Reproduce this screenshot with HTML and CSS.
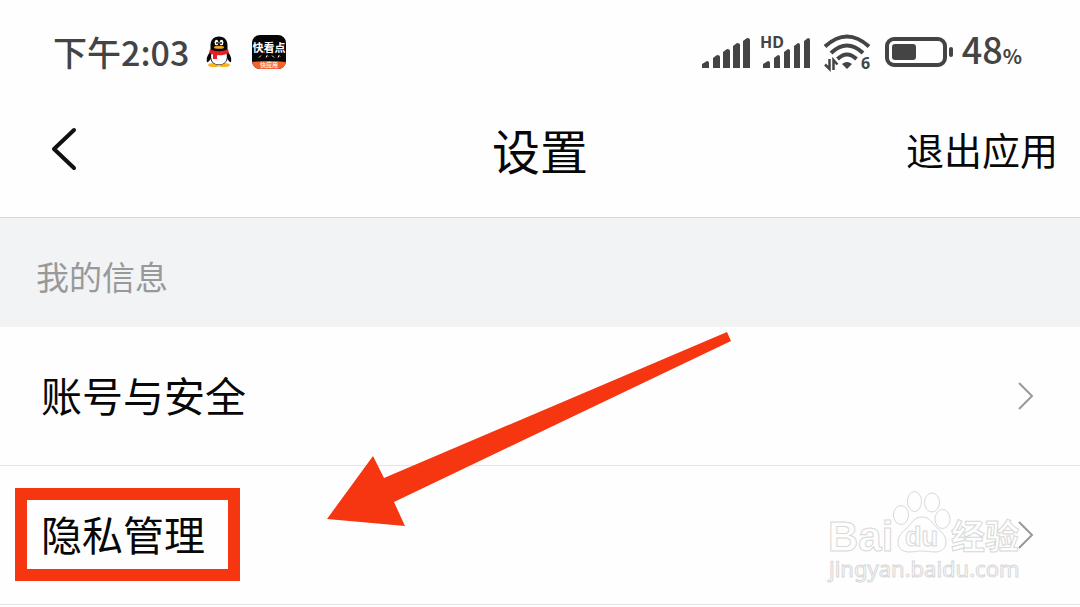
FILE: index.html
```html
<!DOCTYPE html>
<html lang="zh-CN">
<head>
<meta charset="utf-8">
<meta name="viewport" content="width=device-width, initial-scale=1">
<title>设置</title>
<link rel="stylesheet" href="styles.css">
</head>
<body>
<div class="status-bar">
  <span class="clock">下午2:03</span>
  <svg class="app-icon" viewBox="0 0 36 36" aria-hidden="true">
    <ellipse cx="13" cy="31" rx="6" ry="2" fill="#f6b420"/>
    <ellipse cx="23" cy="31" rx="6" ry="2" fill="#f6b420"/>
    <path d="M10 17C7 20 5 24 6 28c1 1 3-2 4-4zM26 17c3 3 5 7 4 11-1 1-3-2-4-4z" fill="#080808"/>
    <path d="M18 2.500c-6 0-8.500 4-8.500 9v6C8 22 9 31 18 31s10-9 8.500-13.500v-6c0-5-2.500-9-8.500-9z" fill="#080808"/>
    <path d="M10.500 19c-1.500 7 1.500 11.500 7.500 11.500s9-4.500 7.500-11.500z" fill="#fff"/>
    <ellipse cx="15.500" cy="8.500" rx="1.900" ry="2.700" fill="#fff"/>
    <ellipse cx="20.500" cy="8.500" rx="1.900" ry="2.700" fill="#fff"/>
    <circle cx="16" cy="9" r="1" fill="#111"/><circle cx="20" cy="9" r="1" fill="#111"/>
    <ellipse cx="18" cy="13.200" rx="5" ry="1.500" fill="#f6a81c"/>
    <path d="M9 15c5 3 13 3 18 0l1 4c-4 2-8 2.500-12 2.200V25h-4v-4.500l-4-1.500z" fill="#e51f25"/>
  </svg>
  <svg class="app-icon news-icon" viewBox="0 0 36 36" aria-hidden="true">
    <defs><clipPath id="news-clip"><rect x="1" y="1" width="34" height="34" rx="8"/></clipPath></defs>
    <g clip-path="url(#news-clip)">
      <rect width="36" height="36" fill="#050505"/>
      <path d="M0 28q18-2 36 0v8H0z" fill="#f4642c"/>
      <text class="news-name" x="18" y="18" text-anchor="middle">快看点</text>
      <circle cx="13" cy="18" r="1" fill="#e83a24"/>
      <path d="M8 23.500l2-2M15 23.500l1-2 1 1M21 21.500l2 2M27 23.500l1-2 1 1" stroke="#eee" fill="none"/>
      <text class="news-tag" x="18" y="33" text-anchor="middle">快应用</text>
    </g>
  </svg>
  <div class="indicators">
    <svg class="signal" viewBox="0 0 48 36" role="img" aria-label="信号">
      <g fill="#444"><path d="M0 34v-4l5-3q2 0 2 2v5zM11 34V24l4-3q3 0 3 2v11zM21 34V18l4-3q3 0 3 2v17zM31 34V12l4-3q3 0 3 2v23zM41 34V7l4-3q3 0 3 2v28z"/></g>
    </svg>
    <svg class="signal signal-hd" viewBox="0 0 52 36" role="img" aria-label="HD 信号">
      <g fill="#444"><path d="M4 34v-4l5-3q2 0 2 2v5zM15 34V24l4-3q2 0 2 2v11zM25 34V18l4-3q2 0 2 2v17zM35 34V12l4-3q2 0 2 2v23zM45 34V7l4-3q2 0 2 2v28z"/></g>
      <text class="hd-text" x="1" y="14">HD</text>
    </svg>
    <svg class="wifi" viewBox="0 0 48 38" role="img" aria-label="Wi-Fi 6">
      <g fill="none" stroke="#444" stroke-width="4">
        <path d="M2 13.500Q24-6.500 46 13.500"/>
        <path d="M8 20Q24 5 40 20"/>
        <path d="M14.500 26Q24 17 33.500 26"/>
      </g>
      <path d="M19 31q5-4 10 0l-5 5z" fill="#444"/>
      <path d="M6.500 26v10L2 31.500M10.500 37V27l4 4.500" fill="none" stroke="#444" stroke-width="2.500"/>
      <text class="wifi-text" x="38" y="36">6</text>
    </svg>
    <svg class="battery" viewBox="0 0 68 30" role="img" aria-label="电量">
      <rect x="2" y="2" width="58" height="26" rx="7" fill="none" stroke="#444" stroke-width="4"/>
      <rect x="7" y="7" width="24" height="16" rx="3" fill="#444"/>
      <rect x="64" y="10" width="4" height="10" rx="2" fill="#444"/>
    </svg>
    <span class="percent">48<small>%</small></span>
  </div>
</div>

<header class="title-bar">
  <button class="back" type="button" aria-label="返回">
    <svg viewBox="0 0 28 44"><path d="M24 3L4 22l20 19" fill="none" stroke="#111" stroke-width="4" stroke-linecap="round" stroke-linejoin="round"/></svg>
  </button>
  <h1 class="title">设置</h1>
  <button class="exit" type="button">退出应用</button>
</header>

<main>
  <h2 class="section-title">我的信息</h2>
  <nav class="list">
    <a class="row" href="#account">
      <span class="label">账号与安全</span>
      <svg class="chevron" viewBox="0 0 18 28"><path d="M2 1l13 13L2 27"/></svg>
    </a>
    <a class="row marked" href="#privacy">
      <span class="label">隐私管理</span>
      <svg class="chevron" viewBox="0 0 18 28"><path d="M2 1l13 13L2 27"/></svg>
    </a>
    <svg class="arrow" viewBox="0 0 404 194" aria-hidden="true">
      <path d="M0 187L46 124l11 22L400 0l4 9L67 170l11 24z" fill="#f63610"/>
    </svg>
    <svg class="watermark" viewBox="0 0 200 96" aria-hidden="true">
      <text class="wm-brand" x="2" y="62">Bai</text>
      <g>
        <ellipse cx="75" cy="26" rx="7.500" ry="9.500"/>
        <ellipse cx="88.500" cy="12.500" rx="7" ry="10"/>
        <ellipse cx="106" cy="13.500" rx="7.500" ry="9.500"/>
        <ellipse cx="116.500" cy="30" rx="7.500" ry="9.500"/>
        <path d="M96 28c-8 0-10 6-15 11-5 4-9 8-9 14 0 7 5 10 11 10 5 0 8-1 13-1s8 1 13 1c7 0 11-4 11-10s-4-10-9-14c-5-5-7-11-15-11z"/>
      </g>
      <text class="wm-du" x="79" y="57">du</text>
      <text class="wm-name" x="125" y="60">经验</text>
      <text class="wm-url" x="3" y="88">jingyan.baidu.com</text>
    </svg>
  </nav>
</main>
</body>
</html>
```
FILE: styles.css
```css
*,
*::before {
  box-sizing: border-box;
}

body {
  margin: 0;
  background: #fefefe;
  color: #080808;
  font-family: "Noto Sans CJK SC", sans-serif;
  overflow-x: hidden;
}

button {
  padding: 0;
  border: 0;
  background: none;
  color: inherit;
  font: inherit;
}

svg {
  display: block;
  flex: none;
}

.status-bar {
  display: flex;
  align-items: center;
  height: 84px;
  padding: 20px 58px 0 53px;
  color: #444;
  font-size: 34px;
  font-weight: 500;
  line-height: 40px;
}

.app-icon {
  width: 36px;
  height: 36px;
  margin-left: 12px;
}

.news-icon {
  margin-left: 14px;
}

.news-name {
  fill: #fff;
  font-size: 11px;
  font-weight: 700;
}

.news-tag {
  fill: #ffe8c8;
  font-size: 6px;
  font-weight: 700;
}

.indicators {
  display: flex;
  align-items: center;
  margin-left: auto;
}

.signal {
  width: 48px;
  height: 36px;
  overflow: visible;
}

.signal-hd {
  width: 52px;
  margin-left: 9px;
}

.hd-text {
  fill: #444;
  font: 700 16px "Noto Sans", sans-serif;
}

.wifi {
  width: 48px;
  height: 38px;
  margin-left: 12px;
  overflow: visible;
}

.wifi-text {
  fill: #444;
  font: 700 16px "Noto Sans", sans-serif;
}

.battery {
  width: 68px;
  height: 30px;
  margin-left: 14px;
}

.percent {
  margin-left: 9px;
  font-size: 36px;
}

.percent small {
  font-size: 20px;
  font-weight: 700;
}

.title-bar {
  display: grid;
  grid-template-columns: 1fr auto 1fr;
  align-items: center;
  height: 134px;
  padding: 0 22px 4px;
  border-bottom: 1px solid #d5d6d8;
}

.back {
  justify-self: start;
  padding-left: 28px;
}

.back svg {
  width: 28px;
  height: 44px;
}

.title {
  margin: 0;
  font-size: 48px;
  font-weight: 400;
  line-height: 64px;
}

.exit {
  justify-self: end;
  font-size: 38px;
  line-height: 48px;
}

.section-title {
  margin: 0;
  padding: 34px 36px 27px;
  background: #f2f3f5;
  color: #999;
  font-size: 33px;
  font-weight: 400;
  line-height: 48px;
}

.list {
  position: relative;
}

.row {
  display: flex;
  align-items: center;
  justify-content: space-between;
  position: relative;
  height: 139px;
  padding: 0 45px 0 41px;
  border-bottom: 1px solid #e5e5e5;
  color: inherit;
  font-size: 41px;
  line-height: 56px;
  text-decoration: none;
}

.label {
  padding-bottom: 4px;
}

.chevron {
  width: 18px;
  height: 28px;
  fill: none;
  stroke: #999;
  stroke-width: 2;
}

.marked::before {
  content: "";
  position: absolute;
  top: 22px;
  left: 15px;
  width: 225px;
  height: 93px;
  border: 12px solid #f63610;
}

.arrow {
  position: absolute;
  top: 5px;
  left: 327px;
  width: 404px;
  height: 194px;
}

.watermark {
  position: absolute;
  top: 162px;
  right: 54px;
  width: 200px;
  height: 96px;
  fill: #fefefe;
  stroke: #d8d8d8;
  stroke-width: 1;
}

.wm-brand {
  font: 700 42px "Liberation Sans", sans-serif;
}

.wm-du {
  font: 700 27px "Liberation Sans", sans-serif;
}

.wm-name {
  font-size: 34px;
  font-weight: 700;
}

.wm-url {
  font: 400 22px "Noto Sans", sans-serif;
}
```
